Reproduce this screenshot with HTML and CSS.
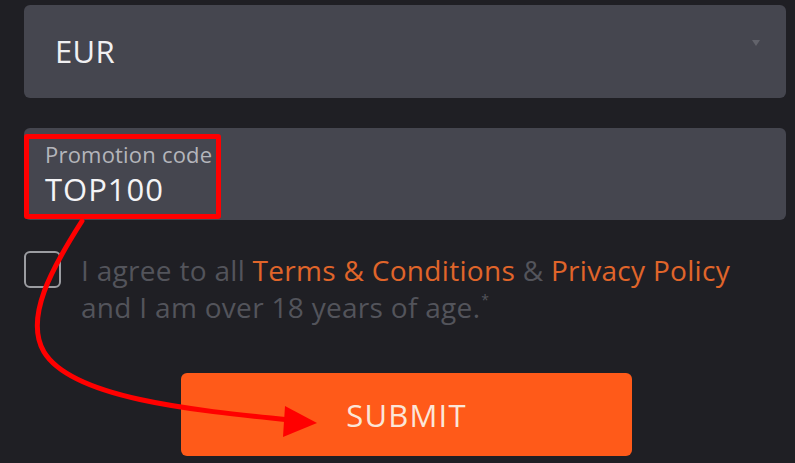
FILE: index.html
```html
<!DOCTYPE html>
<html>
<head>
<meta charset="utf-8">
<link rel="stylesheet" href="styles.css">
</head>
<body>
<div class="form">
  <div class="select">
    <span class="select-value">EUR</span>
    <span class="chevron"></span>
  </div>
  <div class="field">
    <div class="highlight">
      <div class="field-label">Promotion code</div>
      <div class="field-value">TOP100</div>
    </div>
  </div>
  <div class="agree">
    <span class="checkbox"></span>
    <p class="agree-text">I agree to all <a class="link">Terms &amp; Conditions</a> &amp; <a class="link">Privacy Policy</a><br>and I am over 18 years of age.<sup class="star">*</sup></p>
  </div>
  <div class="actions">
    <button class="submit">SUBMIT</button>
  </div>
</div>
<svg class="arrow" width="795" height="463" viewBox="0 0 795 463">
  <path d="M82 221 C 52 268, 24 318, 44 352 C 72 398, 190 410, 290 420" fill="none" stroke="#ff0000" stroke-width="5" stroke-linecap="round"/>
  <polygon points="285,406 317,423 283,437" fill="#ff0000"/>
</svg>
</body>
</html>
```
FILE: styles.css
```css
html, body {
  margin: 0;
  padding: 0;
  background: #1f1f24;
  font-family: "Open Sans", "Noto Sans", sans-serif;
}
.form {
  width: 762px;
  padding: 5px 0 0 24px;
  display: flex;
  flex-direction: column;
}
.select {
  height: 93px;
  background: #45464f;
  border-radius: 6px;
  display: flex;
  align-items: center;
  justify-content: space-between;
  padding: 0 26px 0 31px;
}
.select-value {
  color: #f0f0f2;
  font-size: 31px;
  letter-spacing: 0.3px;
  line-height: 36px;
  position: relative;
  top: -1px;
}
.chevron {
  width: 0;
  height: 0;
  border-left: 4px solid transparent;
  border-right: 4px solid transparent;
  border-top: 6px solid #62636b;
  margin-bottom: 17px;
}
.field {
  margin-top: 30px;
  height: 92px;
  background: #45464f;
  border-radius: 6px;
  padding-top: 6px;
  box-sizing: border-box;
}
.highlight {
  width: 197px;
  height: 85px;
  box-sizing: border-box;
  border: 5px solid #ff0000;
  border-radius: 3px;
  padding: 3px 0 0 16px;
}
.field-label {
  color: #b4b5bb;
  font-size: 22px;
  letter-spacing: 0.2px;
  line-height: 24px;
  white-space: nowrap;
}
.field-value {
  margin-top: 5px;
  color: #f4f4f6;
  font-size: 31px;
  letter-spacing: 1px;
  line-height: 36px;
}
.agree {
  margin-top: 31px;
  display: flex;
  align-items: flex-start;
  gap: 20px;
}
.checkbox {
  width: 37px;
  height: 37px;
  box-sizing: border-box;
  border: 2px solid #9b9ca1;
  border-radius: 6px;
  flex: none;
}
.agree-text {
  margin: 1px 0 0;
  color: #53545b;
  font-size: 28px;
  letter-spacing: 0.3px;
  line-height: 37px;
  white-space: nowrap;
}
.link {
  color: #e0652a;
}
.star {
  font-size: 14px;
  line-height: 0;
  vertical-align: 13px;
  margin-left: 1px;
}
.actions {
  margin-top: 47px;
  padding-left: 157px;
}
.submit {
  width: 451px;
  height: 83px;
  border: none;
  border-radius: 6px;
  background: #ff5a19;
  color: #fbe6d8;
  font-family: "Open Sans", "Noto Sans", sans-serif;
  font-size: 31px;
  letter-spacing: 1.2px;
  padding: 0;
}
.arrow {
  position: absolute;
  left: 0;
  top: 0;
  pointer-events: none;
}
```
